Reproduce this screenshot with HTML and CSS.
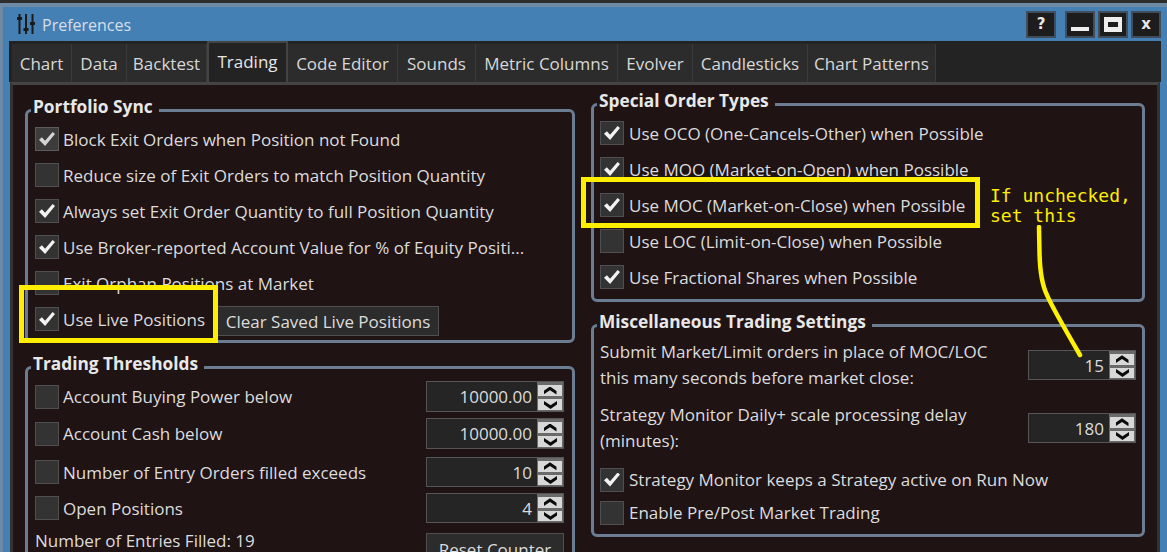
FILE: index.html
```html
<!DOCTYPE html>
<html lang="en">
<head>
  <meta charset="UTF-8">
  <title>Preferences</title>
  <link rel="stylesheet" href="styles.css">
</head>
<body>

<div class="window">
  <div class="titlebar">
    <svg class="app-icon" width="18" height="20" viewBox="0 0 18 20">
      <path d="M2.500 0v20M9 0v20M15.500 0v20" stroke="#1a1a1a" stroke-width="2" fill="none"/>
      <path d="M0 3h5v3H0zM6.500 14h5v3h-5zM13 8h5v3h-5z" fill="#1a1a1a"/>
    </svg>
    <span class="title">Preferences</span>
    <div class="win-btns">
      <button class="win-btn help">?</button>
      <button class="win-btn"><span class="min-glyph"></span></button>
      <button class="win-btn"><span class="max-glyph"></span></button>
      <button class="win-btn close">x</button>
    </div>
  </div>

  <div class="tabs">
    <div class="tab t-chart">Chart</div>
    <div class="tab t-data">Data</div>
    <div class="tab t-backtest">Backtest</div>
    <div class="tab active">Trading</div>
    <div class="tab t-code">Code Editor</div>
    <div class="tab t-sounds">Sounds</div>
    <div class="tab t-metric">Metric Columns</div>
    <div class="tab t-evolver">Evolver</div>
    <div class="tab t-candle">Candlesticks</div>
    <div class="tab t-patterns">Chart Patterns</div>
  </div>

  <div class="panel">
    <div class="col col-left">
      <fieldset class="group portfolio">
        <legend>Portfolio Sync</legend>
        <div class="row"><span class="cb on dim"></span>Block Exit Orders when Position not Found</div>
        <div class="row"><span class="cb"></span>Reduce size of Exit Orders to match Position Quantity</div>
        <div class="row"><span class="cb on"></span>Always set Exit Order Quantity to full Position Quantity</div>
        <div class="row"><span class="cb on"></span>Use Broker-reported Account Value for % of Equity Positi...</div>
        <div class="row"><span class="cb"></span>Exit Orphan Positions at Market</div>
        <div class="row"><span class="cb on"></span>Use Live Positions<button class="btn clear-btn">Clear Saved Live Positions</button></div>
      </fieldset>

      <fieldset class="group thresholds">
        <legend>Trading Thresholds</legend>
        <div class="row spin-row"><span class="cb"></span>Account Buying Power below
          <div class="spin"><span class="spin-val">10000.00</span><span class="arrows"><i class="up"></i><i class="down"></i></span></div></div>
        <div class="row spin-row"><span class="cb"></span>Account Cash below
          <div class="spin"><span class="spin-val">10000.00</span><span class="arrows"><i class="up"></i><i class="down"></i></span></div></div>
        <div class="row spin-row thin gap"><span class="cb"></span>Number of Entry Orders filled exceeds
          <div class="spin"><span class="spin-val">10</span><span class="arrows"><i class="up"></i><i class="down"></i></span></div></div>
        <div class="row spin-row thin"><span class="cb"></span>Open Positions
          <div class="spin"><span class="spin-val">4</span><span class="arrows"><i class="up"></i><i class="down"></i></span></div></div>
        <div class="entries"><span class="entries-text">Number of Entries Filled: 19</span><button class="btn reset-btn">Reset Counter</button></div>
      </fieldset>
    </div>

    <div class="col col-right">
      <fieldset class="group special">
        <legend>Special Order Types</legend>
        <div class="row"><span class="cb on"></span>Use OCO (One-Cancels-Other) when Possible</div>
        <div class="row"><span class="cb on"></span>Use MOO (Market-on-Open) when Possible</div>
        <div class="row"><span class="cb on"></span>Use MOC (Market-on-Close) when Possible</div>
        <div class="row"><span class="cb"></span>Use LOC (Limit-on-Close) when Possible</div>
        <div class="row"><span class="cb on"></span>Use Fractional Shares when Possible</div>
      </fieldset>

      <fieldset class="group misc">
        <legend>Miscellaneous Trading Settings</legend>
        <div class="two-line"><p>Submit Market/Limit orders in place of MOC/LOC<br>this many seconds before market close:</p>
          <div class="spin small"><span class="spin-val">15</span><span class="arrows"><i class="up"></i><i class="down"></i></span></div></div>
        <div class="two-line second"><p>Strategy Monitor Daily+ scale processing delay<br>(minutes):</p>
          <div class="spin small"><span class="spin-val">180</span><span class="arrows"><i class="up"></i><i class="down"></i></span></div></div>
        <div class="row compact first-compact"><span class="cb on"></span>Strategy Monitor keeps a Strategy active on Run Now</div>
        <div class="row compact"><span class="cb"></span>Enable Pre/Post Market Trading</div>
      </fieldset>
    </div>
  </div>
</div>

<!-- annotations drawn over the screenshot -->
<div class="mark mark-live"></div>
<div class="mark mark-moc"></div>
<div class="note">If unchecked,<br>set this</div>
<svg class="pointer" width="60" height="135" viewBox="0 0 60 135">
  <path d="M9 2 L9.500 28 C10 50 13 62 17 70 C22 82 36 106 50 130" stroke="#fff200" stroke-width="4.500" fill="none" stroke-linecap="round"/>
</svg>

</body>
</html>
```

FILE: styles.css
```css
* {
  box-sizing: border-box;
}
html, body {
  height: 100%;
}
body {
  position: relative;
  margin: 0;
  overflow: hidden;
  background: #2e2e2e;
  font-family: "Open Sans", "Noto Sans", sans-serif;
  font-size: 17px;
  color: #dcdcdc;
}
.window {
  height: 549px;
  margin-top: 3px;
  padding: 0 6px;
  background: #4480b4;
  border-top: 4px solid #6f8aa5;
  border-left: 3px solid #6f8aa5;
}
.titlebar {
  display: flex;
  align-items: center;
  height: 34px;
  padding-left: 8px;
}
.app-icon {
  margin-right: 7px;
}
.title {
  padding-top: 1px;
  font-size: 16px;
  color: #d6dfe8;
}
.win-btns {
  display: flex;
  margin-left: auto;
}
.win-btn {
  display: flex;
  align-items: center;
  justify-content: center;
  width: 30px;
  height: 27px;
  margin-left: 3px;
  padding: 0;
  border: 2px solid #3f4d5c;
  background: #1d1d1d;
  color: #e8e8e8;
  font-family: "DejaVu Sans", sans-serif;
  font-size: 15px;
  font-weight: bold;
}
.win-btn.help {
  margin-right: 6px;
}
.min-glyph {
  width: 18px;
  height: 4px;
  margin-top: 9px;
  background: #eee;
}
.max-glyph {
  width: 18px;
  height: 15px;
  border: solid #eee;
  border-width: 5px 4px;
}
.tabs {
  display: flex;
  align-items: flex-end;
  height: 41px;
  padding-left: 3px;
  background: #232323;
}
.tab {
  height: 38px;
  padding-top: 8px;
  text-align: center;
  background: #2c2c2c;
  border-right: 1px solid #3a3a3a;
  color: #d8d8d8;
}
.t-chart { width: 60px; }
.t-data { width: 55px; }
.t-backtest { width: 80px; }
.t-code { width: 110px; }
.t-sounds { width: 78px; }
.t-metric { width: 142px; }
.t-evolver { width: 75px; }
.t-candle { width: 115px; }
.t-patterns { width: 128px; }
.tab.active {
  width: 81px;
  height: 41px;
  padding-top: 7px;
  background: #232323;
  border: 2px solid #444;
  border-bottom: none;
  color: #e6e6e6;
}
.panel {
  display: flex;
  gap: 16px;
  height: 470px;
  margin: 0 1px;
  padding: 10px 12px 0;
  background: #1f1314;
  border: solid #333;
  border-width: 3px 3px 0;
  border-top-color: #444;
}
.col {
  width: 550px;
}
.col-right {
  width: 554px;
}
.group {
  margin: 0;
  padding: 0 0 0 7px;
  min-width: 0;
  border: 3px solid #6b7d92;
  border-radius: 6px;
}
.group legend {
  margin: 0 0 -4px -4px;
  padding: 0 6px 6px 2px;
  font-size: 17.300px;
  font-weight: 700;
  line-height: 24px;
  color: #e8e8e8;
}
.portfolio {
  height: 248px;
}
.thresholds {
  height: 220px;
  margin-top: 9px;
}
.col-right .group {
  padding-left: 6px;
}
.col-right .group legend {
  margin-left: -3px;
}
.col-right .cb {
  margin-right: 5px;
}
.special {
  height: 213px;
  margin-top: -6px;
}
.misc {
  height: 227px;
  margin-top: 8px;
  padding-top: 3px;
}
.row {
  display: flex;
  align-items: center;
  height: 36px;
  white-space: nowrap;
}
.cb {
  position: relative;
  flex: none;
  width: 24px;
  height: 24px;
  margin-right: 4px;
  background: #333;
  border: 1px solid #4f4f4f;
}
.cb.on::after {
  content: "";
  position: absolute;
  left: 3px;
  top: 4px;
  width: 16px;
  height: 14px;
  background: #f2f2f2;
  clip-path: polygon(0 55%, 18% 38%, 38% 62%, 85% 0, 100% 15%, 38% 100%);
}
.cb.dim {
  background: #3c3c3c;
  border-color: #5a5a5a;
}
.cb.dim::after {
  background: #d4d4d4;
}
.btn {
  height: 30px;
  padding: 0;
  background: #2c2c2c;
  border: 1px solid #4f4f4f;
  color: #dcdcdc;
  font: inherit;
}
.clear-btn {
  width: 222px;
  margin-left: 12px;
  margin-top: 4px;
}
.spin-row {
  height: 37px;
}
.spin-row.thin {
  height: 36px;
}
.spin-row.thin .spin {
  height: 30px;
}
.spin-row.gap {
  margin-top: 2px;
}
.spin {
  display: flex;
  align-items: stretch;
  width: 138px;
  height: 31px;
  margin-left: auto;
  margin-right: 8px;
  background: #252525;
  border: 1px solid #555;
}
.spin-val {
  flex: 1;
  padding-right: 5px;
  text-align: right;
  line-height: 29px;
}
.arrows {
  display: flex;
  flex-direction: column;
  gap: 3px;
  width: 26px;
  padding: 3px 1px 1px;
  background: #6a6a6a;
}
.arrows i {
  display: flex;
  flex: 1;
  align-items: center;
  justify-content: center;
  background: #d8d8d8;
}
.arrows i::after {
  content: "";
  width: 13px;
  height: 8px;
  background: #0a0a0a;
  clip-path: polygon(50% 0, 100% 55%, 100% 100%, 50% 48%, 0 100%, 0 55%);
}
.arrows i.down::after {
  transform: rotate(180deg);
}
.entries {
  display: flex;
  align-items: flex-start;
}
.entries-text {
  line-height: 30px;
}
.reset-btn {
  width: 138px;
  height: 32px;
  margin: 7px 8px 0 auto;
}
.two-line {
  display: flex;
  align-items: center;
  height: 52px;
}
.two-line p {
  margin: 0;
  line-height: 26px;
}
.two-line.second {
  margin-top: 11px;
}
.spin.small {
  width: 108px;
  height: 30px;
  margin-right: 6px;
}
.row.compact {
  height: 33px;
}
.row.first-compact {
  margin-top: 9px;
}
.mark {
  position: absolute;
  border: 5px solid #ffee00;
}
.mark-live {
  left: 19px;
  top: 285px;
  width: 199px;
  height: 58px;
}
.mark-moc {
  left: 581px;
  top: 177px;
  width: 399px;
  height: 51px;
}
.note {
  position: absolute;
  left: 990px;
  top: 186px;
  font-family: "DejaVu Sans Mono", monospace;
  font-size: 18px;
  line-height: 20px;
  color: #ffee00;
}
.pointer {
  position: absolute;
  left: 1030px;
  top: 225px;
}
```
